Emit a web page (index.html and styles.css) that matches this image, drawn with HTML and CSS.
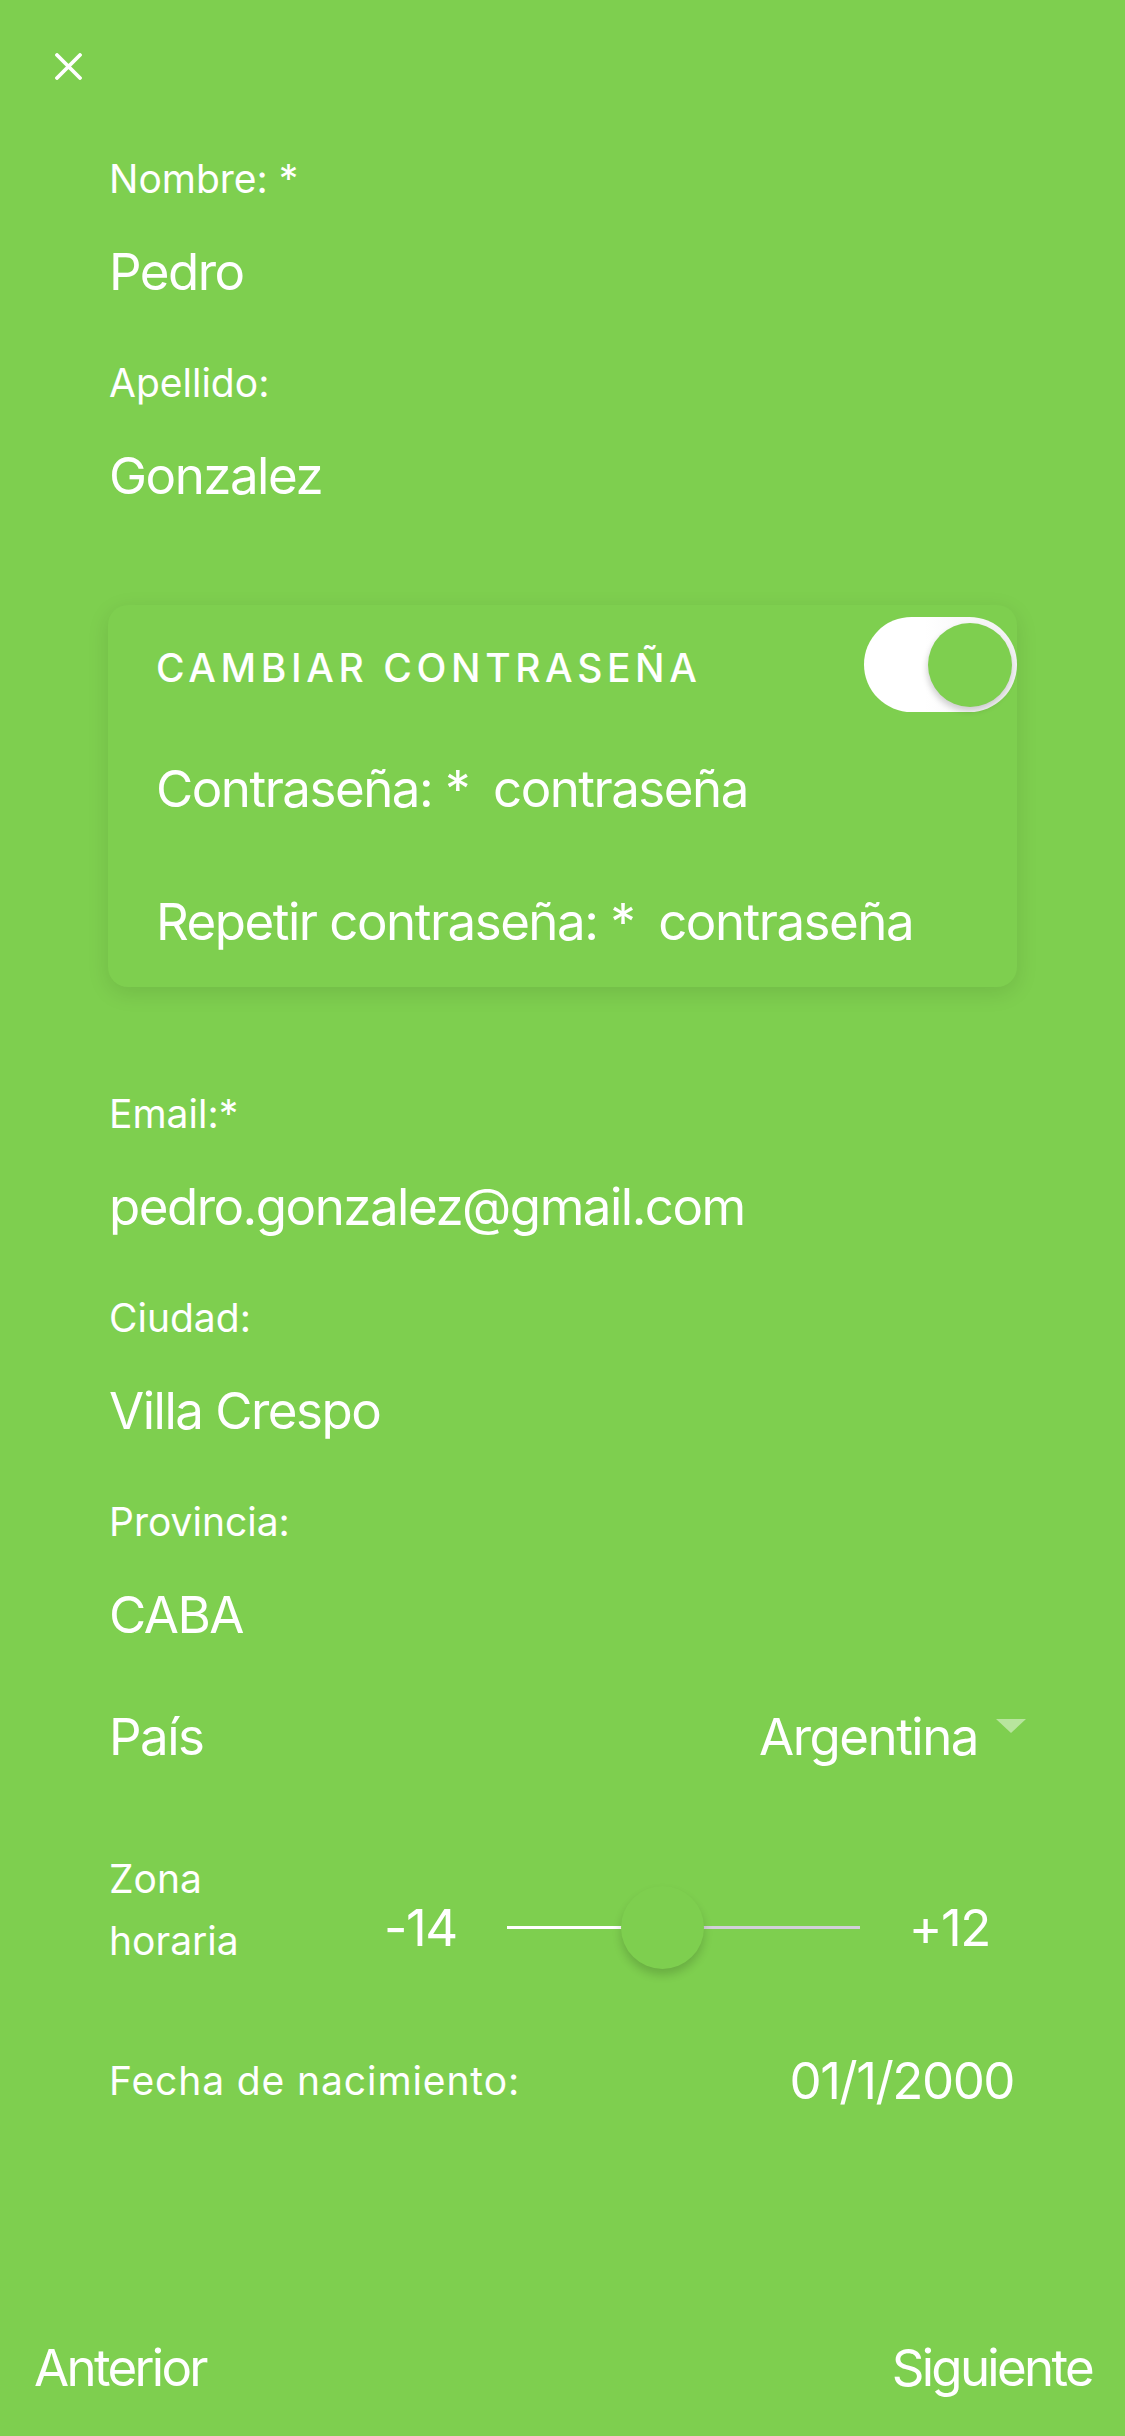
FILE: index.html
```html
<!DOCTYPE html>
<html lang="es">
<head>
    <meta charset="UTF-8">
    <meta name="viewport" content="width=device-width, initial-scale=1.0">
    <title>Editar perfil</title>
    <link rel="stylesheet" href="styles.css">
</head>
<body>
    <div class="screen">
        <div class="topbar">
            <button class="close" type="button" aria-label="Cerrar">
                <svg width="27" height="27" viewBox="0 0 27 27">
                    <path d="M2 2 L25 25 M25 2 L2 25" stroke="#fff" stroke-width="3.8" stroke-linecap="round" fill="none"/>
                </svg>
            </button>
        </div>

        <div class="form">
            <div class="field">
                <div class="label">Nombre: *</div>
                <div class="value">Pedro</div>
            </div>
            <div class="field">
                <div class="label">Apellido:</div>
                <div class="value">Gonzalez</div>
            </div>

            <div class="card">
                <div class="card-head">
                    <span class="card-title">CAMBIAR CONTRASEÑA</span>
                    <span class="switch"><span class="knob"></span></span>
                </div>
                <div class="card-row first">
                    <span>Contraseña: *</span>
                    <span class="input">contraseña</span>
                </div>
                <div class="card-row">
                    <span>Repetir contraseña: *</span>
                    <span class="input">contraseña</span>
                </div>
            </div>

            <div class="field">
                <div class="label">Email:*</div>
                <div class="value">pedro.gonzalez@gmail.com</div>
            </div>
            <div class="field">
                <div class="label">Ciudad:</div>
                <div class="value">Villa Crespo</div>
            </div>
            <div class="field">
                <div class="label">Provincia:</div>
                <div class="value">CABA</div>
            </div>

            <div class="row pais">
                <span class="big">País</span>
                <span class="select">
                    <span class="big">Argentina</span>
                    <span class="caret"></span>
                </span>
            </div>

            <div class="row zona">
                <div class="zona-label">Zona<br>horaria</div>
                <span class="big">-14</span>
                <div class="slider">
                    <div class="track-fill"></div>
                    <div class="track-rest"></div>
                    <div class="thumb"></div>
                </div>
                <span class="big">+12</span>
            </div>

            <div class="row fecha">
                <span class="label wide">Fecha de nacimiento:</span>
                <span class="big">01/1/2000</span>
            </div>
        </div>

        <div class="footer">
            <span class="big">Anterior</span>
            <span class="big">Siguiente</span>
        </div>
    </div>
</body>
</html>
```

FILE: styles.css
```css
body {
    margin: 0;
    padding: 0;
    background-color: #7ecf4f;
    color: #fff;
    font-family: Inter, "Noto Sans", sans-serif;
}
.screen {
    width: 1125px;
    min-height: 2436px;
    display: flex;
    flex-direction: column;
}
.topbar {
    height: 132px;
    display: flex;
    align-items: center;
    padding-left: 55px;
}
.close {
    background: none;
    border: none;
    padding: 0;
    width: 27px;
    height: 27px;
    display: flex;
}
.form {
    padding: 21px 108px 0 109px;
}
.label {
    font-size: 39px;
    line-height: 52px;
}
.label.wide {
    letter-spacing: 0.9px;
}
.value, .big {
    font-size: 51px;
    line-height: 68px;
    letter-spacing: -1.5px;
}
.value {
    margin-top: 33px;
}
.field {
    margin-bottom: 51px;
}

.card {
    margin: 95px 0 101px -1px;
    padding: 12px 0 31px 48px;
    border-radius: 20px;
    background-color: #7ecf4f;
    box-shadow: 0 6px 22px rgba(0, 0, 0, 0.1);
}
.card-head {
    display: flex;
    justify-content: space-between;
    align-items: center;
}
.card-title {
    font-size: 39px;
    line-height: 52px;
    letter-spacing: 4.6px;
    font-weight: 500;
    margin-top: 7px;
}
.switch {
    width: 153px;
    height: 95px;
    border-radius: 48px;
    background: linear-gradient(90deg, #fff 40%, #f0f0f2 100%);
    position: relative;
}
.knob {
    position: absolute;
    top: 6px;
    right: 5px;
    width: 84px;
    height: 84px;
    border-radius: 50%;
    background-color: #7ecf4f;
    box-shadow: -1px 4px 6px rgba(0, 0, 0, 0.18);
}
.card-row {
    font-size: 51px;
    line-height: 68px;
    letter-spacing: -1.5px;
    margin-top: 65px;
    display: flex;
    gap: 24px;
}
.card-row.first {
    margin-top: 43px;
}

.row {
    display: flex;
    align-items: center;
}
.pais {
    justify-content: space-between;
    margin-top: 54px;
    margin-right: -9px;
}
.select {
    display: flex;
    align-items: center;
    gap: 18px;
}
.caret {
    width: 0;
    height: 0;
    border-left: 15px solid transparent;
    border-right: 15px solid transparent;
    border-top: 14px solid rgba(255, 255, 255, 0.45);
    margin-top: -22px;
}

.zona {
    margin-top: 77px;
}
.zona-label {
    flex: 0 0 275px;
    font-size: 39px;
    line-height: 62px;
    padding-bottom: 35px;
}
.slider {
    position: relative;
    width: 353px;
    height: 3px;
    margin: 0 49px 0 50px;
    display: flex;
}
.track-fill {
    width: 155px;
    background-color: #fff;
}
.track-rest {
    flex: 1;
    background-color: #d2d0da;
}
.thumb {
    position: absolute;
    left: 114px;
    top: -40px;
    width: 83px;
    height: 83px;
    border-radius: 50%;
    background-color: #7ecf4f;
    box-shadow: 0 6px 10px rgba(0, 0, 0, 0.16);
}

.fecha {
    justify-content: space-between;
    margin-top: 40px;
    margin-right: 3px;
}

.footer {
    margin-top: auto;
    display: flex;
    justify-content: space-between;
    padding: 0 33px 34px 34px;
}
.footer .big {
    letter-spacing: -2.7px;
}
```
